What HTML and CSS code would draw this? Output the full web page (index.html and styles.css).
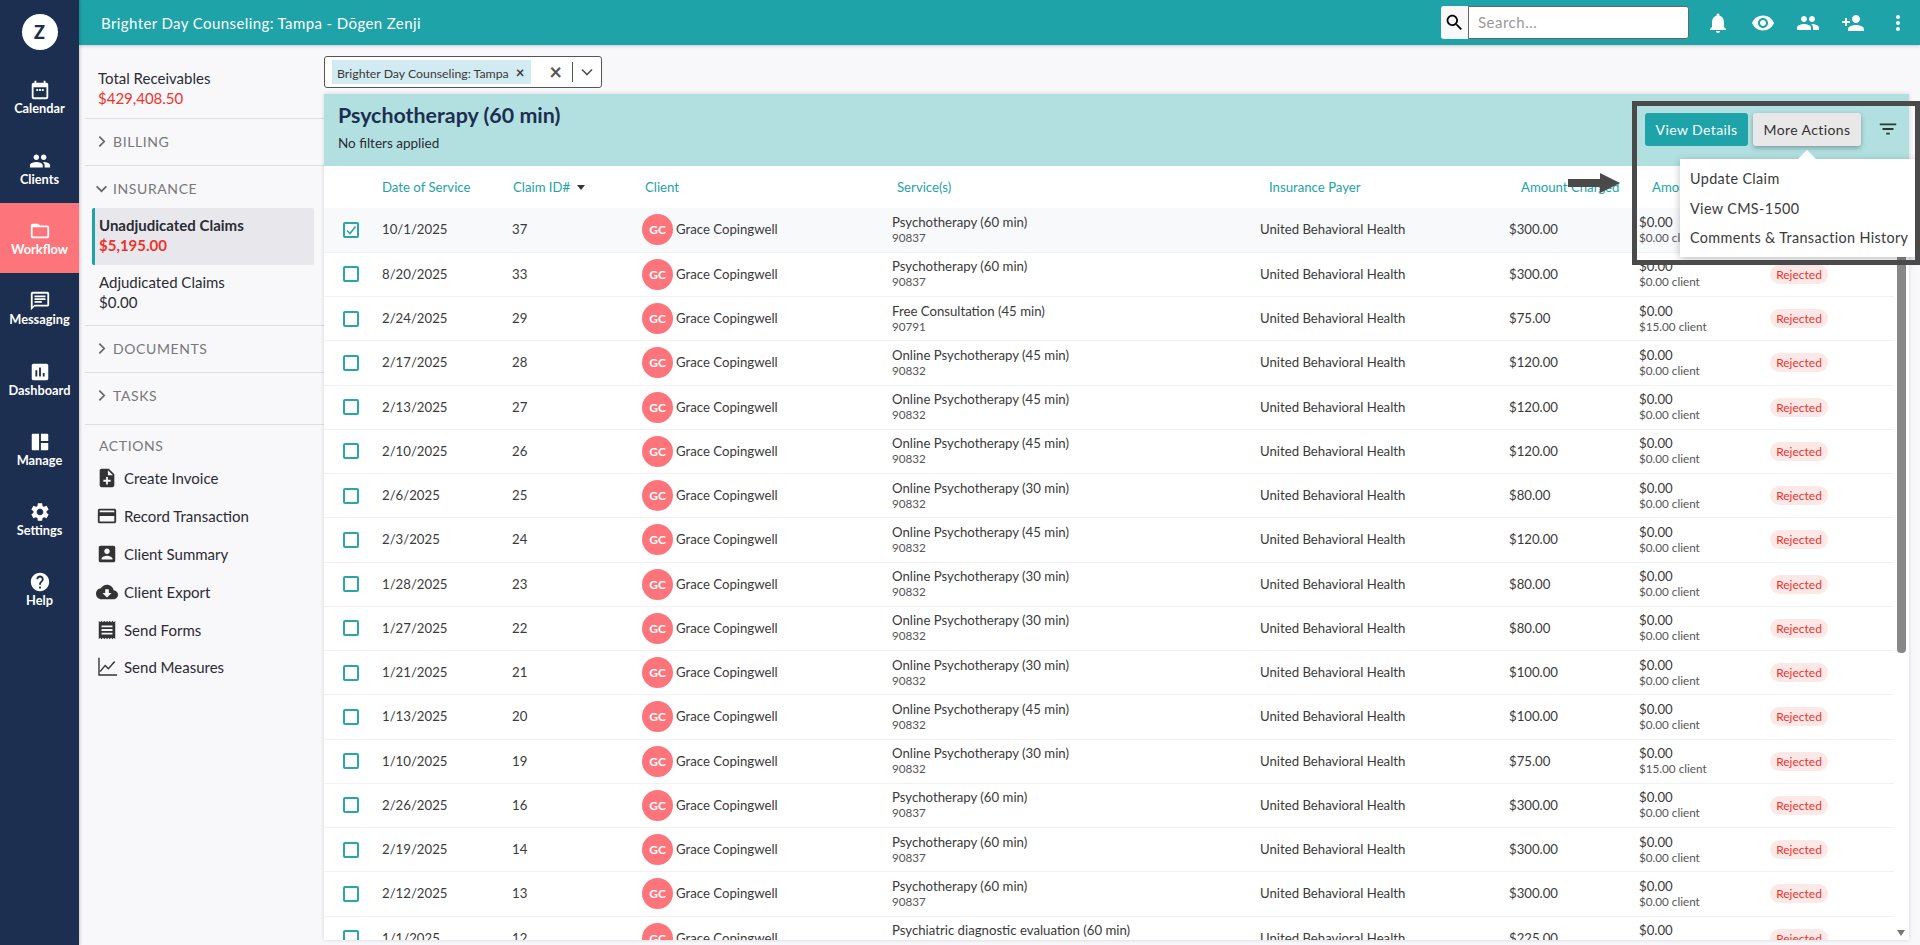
FILE: index.html
```html
<!DOCTYPE html>
<html>
<head>
    <title>Claims</title>
    <link rel="stylesheet" href="styles.css">
</head>
<body>
    <svg class="defs" width="0" height="0">
        <symbol id="i-people" viewBox="0 0 24 24"><path d="M16 11c1.66 0 2.99-1.34 2.99-3S17.66 5 16 5c-1.66 0-3 1.34-3 3s1.34 3 3 3zm-8 0c1.66 0 2.99-1.34 2.99-3S9.66 5 8 5C6.34 5 5 6.34 5 8s1.34 3 3 3zm0 2c-2.33 0-7 1.17-7 3.5V19h14v-2.5c0-2.33-4.67-3.5-7-3.5zm8 0c-.29 0-.62.02-.97.05 1.16.84 1.97 1.97 1.97 3.45V19h6v-2.5c0-2.33-4.67-3.5-7-3.5z"/></symbol>
        <symbol id="i-chev-r" viewBox="0 0 12 12"><path d="M4 1.5L8.5 6 4 10.5" fill="none" stroke="#666" stroke-width="1.6"/></symbol>
    </svg>

    <nav class="rail">
        <div class="logo">Z</div>
        <a class="rail-item">
            <svg viewBox="0 0 24 24"><path d="M19 4h-1V2h-2v2H8V2H6v2H5c-1.1 0-2 .9-2 2v14c0 1.1.9 2 2 2h14c1.1 0 2-.9 2-2V6c0-1.1-.9-2-2-2zm0 16H5V9h14v11zM8 11h2v2H8zm3 0h2v2h-2zm3 0h2v2h-2z"/></svg>
            <span>Calendar</span>
        </a>
        <a class="rail-item">
            <svg viewBox="0 0 24 24"><use href="#i-people"/></svg>
            <span>Clients</span>
        </a>
        <a class="rail-item active">
            <svg viewBox="0 0 24 24"><path d="M20 6h-8l-2-2H4c-1.1 0-1.99.9-1.99 2L2 18c0 1.1.9 2 2 2h16c1.1 0 2-.9 2-2V8c0-1.1-.9-2-2-2zm0 12H4V8h16v10z"/></svg>
            <span>Workflow</span>
        </a>
        <a class="rail-item">
            <svg viewBox="0 0 24 24"><path d="M20 2H4c-1.1 0-2 .9-2 2v18l4-4h14c1.1 0 2-.9 2-2V4c0-1.1-.9-2-2-2zm0 14H6l-2 2V4h16v12zM6 12h8v2H6zm0-3h12v2H6zm0-3h12v2H6z"/></svg>
            <span>Messaging</span>
        </a>
        <a class="rail-item">
            <svg viewBox="0 0 24 24"><path d="M19 3H5c-1.1 0-2 .9-2 2v14c0 1.1.9 2 2 2h14c1.1 0 2-.9 2-2V5c0-1.1-.9-2-2-2zM9 17H7v-7h2v7zm4 0h-2V7h2v10zm4 0h-2v-4h2v4z"/></svg>
            <span>Dashboard</span>
        </a>
        <a class="rail-item">
            <svg viewBox="0 0 24 24"><path d="M4 3h7v18H4c-.6 0-1-.4-1-1V4c0-.6.4-1 1-1zm9 0h7c.6 0 1 .4 1 1v7h-8zm0 10h8v7c0 .6-.4 1-1 1h-7z"/></svg>
            <span>Manage</span>
        </a>
        <a class="rail-item">
            <svg viewBox="0 0 24 24"><path d="M19.14 12.94c.04-.3.06-.61.06-.94 0-.32-.02-.64-.07-.94l2.03-1.58c.18-.14.23-.41.12-.61l-1.92-3.32c-.12-.22-.37-.29-.59-.22l-2.39.96c-.5-.38-1.03-.7-1.62-.94l-.36-2.54c-.04-.24-.24-.41-.48-.41h-3.84c-.24 0-.43.17-.47.41l-.36 2.54c-.59.24-1.13.57-1.62.94l-2.39-.96c-.22-.08-.47 0-.59.22L2.74 8.87c-.12.21-.08.47.12.61l2.03 1.58c-.05.3-.09.63-.09.94s.02.64.07.94l-2.03 1.58c-.18.14-.23.41-.12.61l1.92 3.32c.12.22.37.29.59.22l2.39-.96c.5.38 1.03.7 1.62.94l.36 2.54c.05.24.24.41.48.41h3.84c.24 0 .44-.17.47-.41l.36-2.54c.59-.24 1.13-.56 1.62-.94l2.39.96c.22.08.47 0 .59-.22l1.92-3.32c.12-.22.07-.47-.12-.61l-2.01-1.58zM12 15.6c-1.98 0-3.6-1.62-3.6-3.6s1.62-3.6 3.6-3.6 3.6 1.62 3.6 3.6-1.62 3.6-3.6 3.6z"/></svg>
            <span>Settings</span>
        </a>
        <a class="rail-item">
            <svg viewBox="0 0 24 24"><path d="M12 2C6.48 2 2 6.48 2 12s4.48 10 10 10 10-4.48 10-10S17.52 2 12 2zm1 17h-2v-2h2v2zm2.07-7.75l-.9.92C13.45 12.9 13 13.5 13 15h-2v-.5c0-1.1.45-2.1 1.17-2.83l1.24-1.26c.37-.36.59-.86.59-1.41 0-1.1-.9-2-2-2s-2 .9-2 2H8c0-2.21 1.79-4 4-4s4 1.79 4 4c0 .88-.36 1.68-.93 2.25z"/></svg>
            <span>Help</span>
        </a>
    </nav>

    <div class="page">
        <header class="topbar">
            <div class="topbar-title">Brighter Day Counseling: Tampa - Dōgen Zenji</div>
            <div class="search">
                <span class="search-btn">
                    <svg viewBox="0 0 24 24"><path d="M15.5 14h-.79l-.28-.27C15.41 12.59 16 11.11 16 9.5 16 5.91 13.09 3 9.5 3S3 5.91 3 9.5 5.91 16 9.5 16c1.61 0 3.09-.59 4.23-1.57l.27.28v.79l5 4.99L20.49 19l-4.99-5zm-6 0C7.01 14 5 11.99 5 9.5S7.01 5 9.5 5 14 7.01 14 9.5 11.99 14 9.5 14z"/></svg>
                </span>
                <span class="search-input">Search...</span>
            </div>
            <div class="top-icons">
                <svg viewBox="0 0 24 24"><path d="M12 22c1.1 0 2-.9 2-2h-4c0 1.1.89 2 2 2zm6-6v-5c0-3.07-1.64-5.64-4.5-6.32V4c0-.83-.67-1.5-1.5-1.5s-1.5.67-1.5 1.5v.68C7.63 5.36 6 7.92 6 11v5l-2 2v1h16v-1l-2-2z"/></svg>
                <svg viewBox="0 0 24 24"><path d="M12 4.5C7 4.5 2.73 7.61 1 12c1.73 4.39 6 7.5 11 7.5s9.27-3.11 11-7.5c-1.73-4.39-6-7.5-11-7.5zM12 17c-2.76 0-5-2.24-5-5s2.24-5 5-5 5 2.24 5 5-2.24 5-5 5zm0-8c-1.66 0-3 1.34-3 3s1.34 3 3 3 3-1.34 3-3-1.34-3-3-3z"/></svg>
                <svg viewBox="0 0 24 24"><use href="#i-people"/></svg>
                <svg viewBox="0 0 24 24"><path d="M15 12c2.21 0 4-1.79 4-4s-1.79-4-4-4-4 1.79-4 4 1.79 4 4 4zm-9-2V7H4v3H1v2h3v3h2v-3h3v-2H6zm9 4c-2.67 0-8 1.34-8 4v2h16v-2c0-2.66-5.33-4-8-4z"/></svg>
                <svg viewBox="0 0 24 24"><path d="M12 8c1.1 0 2-.9 2-2s-.9-2-2-2-2 .9-2 2 .9 2 2 2zm0 2c-1.1 0-2 .9-2 2s.9 2 2 2 2-.9 2-2-.9-2-2-2zm0 6c-1.1 0-2 .9-2 2s.9 2 2 2 2-.9 2-2-.9-2-2-2z"/></svg>
            </div>
        </header>

        <div class="content">
            <aside class="side">
                <div class="side-block total">
                    <div>Total Receivables</div>
                    <div class="red">$429,408.50</div>
                </div>
                <div class="side-head"><svg viewBox="0 0 12 12"><use href="#i-chev-r"/></svg>BILLING</div>
                <div class="side-group">
                    <div class="side-head open"><svg viewBox="0 0 12 12"><path d="M1.5 4L6 8.5 10.5 4" fill="none" stroke="#666" stroke-width="1.6"/></svg>INSURANCE</div>
                    <div class="side-link selected">
                        <div>Unadjudicated Claims</div>
                        <div class="red">$5,195.00</div>
                    </div>
                    <div class="side-link">
                        <div>Adjudicated Claims</div>
                        <div>$0.00</div>
                    </div>
                </div>
                <div class="side-head"><svg viewBox="0 0 12 12"><use href="#i-chev-r"/></svg>DOCUMENTS</div>
                <div class="side-head tasks"><svg viewBox="0 0 12 12"><use href="#i-chev-r"/></svg>TASKS</div>
                <div class="actions">
                    <div class="actions-title">ACTIONS</div>
                    <a><svg viewBox="0 0 24 24"><path d="M14 2H6c-1.1 0-1.99.9-1.99 2L4 20c0 1.1.89 2 1.99 2H18c1.1 0 2-.9 2-2V8l-6-6zm2 14h-3v3h-2v-3H8v-2h3v-3h2v3h3v2zm-3-7V3.5L18.5 9H13z"/></svg>Create Invoice</a>
                    <a><svg viewBox="0 0 24 24"><path d="M20 4H4c-1.11 0-1.99.89-1.99 2L2 18c0 1.11.89 2 2 2h16c1.11 0 2-.89 2-2V6c0-1.11-.89-2-2-2zm0 14H4v-6h16v6zm0-10H4V6h16v2z"/></svg>Record Transaction</a>
                    <a><svg viewBox="0 0 24 24"><path d="M3 5v14c0 1.1.89 2 2 2h14c1.1 0 2-.9 2-2V5c0-1.1-.9-2-2-2H5c-1.11 0-2 .9-2 2zm12 4c0 1.66-1.34 3-3 3s-3-1.34-3-3 1.34-3 3-3 3 1.34 3 3zm-9 8c0-2 4-3.1 6-3.1s6 1.1 6 3.1v1H6v-1z"/></svg>Client Summary</a>
                    <a><svg viewBox="0 0 24 24"><path d="M19.35 10.04C18.67 6.59 15.64 4 12 4 9.11 4 6.6 5.64 5.35 8.04 2.34 8.36 0 10.91 0 14c0 3.31 2.69 6 6 6h13c2.76 0 5-2.24 5-5 0-2.64-2.05-4.78-4.65-4.96zM17 13l-5 5-5-5h3V9h4v4h3z"/></svg>Client Export</a>
                    <a><svg viewBox="0 0 24 24"><path d="M18 17H6v-2h12v2zm0-4H6v-2h12v2zm0-4H6V7h12v2zM3 22l1.5-1.5L6 22l1.5-1.5L9 22l1.5-1.5L12 22l1.5-1.5L15 22l1.5-1.5L18 22l1.5-1.5L21 22V2l-1.5 1.5L18 2l-1.5 1.5L15 2l-1.5 1.5L12 2l-1.5 1.5L9 2 7.5 3.5 6 2 4.5 3.5 3 2v20z"/></svg>Send Forms</a>
                    <a><svg viewBox="0 0 24 24"><path d="M2.5 2v19.5H23V20H4V2zM5 17.5l5-6 3.5 3.5 7.5-8.5-1.2-1-6.3 7.2-3.5-3.5-6 7.2z"/></svg>Send Measures</a>
                </div>
            </aside>

            <main class="main">
                <div class="picker">
                    <div class="chip">Brighter Day Counseling: Tampa<b>×</b></div>
                    <div class="picker-clear">×</div>
                    <div class="picker-arrow"><svg viewBox="0 0 12 12"><path d="M1 3.5L6 8.5 11 3.5" fill="none" stroke="#555" stroke-width="1.7"/></svg></div>
                </div>

                <section class="card">
                    <div class="card-head">
                        <div>
                            <h1>Psychotherapy (60 min)</h1>
                            <p>No filters applied</p>
                        </div>
                        <div class="head-btns">
                            <button class="btn btn-teal">View Details</button>
                            <button class="btn btn-grey">More Actions</button>
                            <svg class="filter" viewBox="0 0 24 24"><path d="M10 18h4v-2h-4v2zM3 6v2h18V6H3zm3 7h12v-2H6v2z"/></svg>
                        </div>
                    </div>

                    <div class="table-wrap">
                        <table>
                            <colgroup>
                                <col class="c-check"><col class="c-date"><col class="c-claim"><col class="c-client"><col class="c-service"><col class="c-payer"><col class="c-charged"><col class="c-amount"><col class="c-status">
                            </colgroup>
                            <thead>
                                <tr>
                                    <th></th>
                                    <th>Date of Service</th>
                                    <th class="h-claim">Claim ID# <i class="sort"></i></th>
                                    <th class="h-client">Client</th>
                                    <th class="h-service">Service(s)</th>
                                    <th class="h-payer">Insurance Payer</th>
                                    <th class="h-charged">Amount Charged</th>
                                    <th class="h-amount">Amount Paid</th>
                                    <th></th>
                                </tr>
                            </thead>
                            <tbody>
                                <tr class="first">
                                    <td><span class="box checked"><svg viewBox="0 0 12 12"><path d="M2 6.5L5 9.5 10.5 2.5" fill="none" stroke="#2aa5a9" stroke-width="1.6"/></svg></span></td>
                                    <td>10/1/2025</td><td>37</td>
                                    <td><div class="who"><span class="avatar">GC</span>Grace Copingwell</div></td>
                                    <td>Psychotherapy (60 min)<small>90837</small></td>
                                    <td>United Behavioral Health</td><td>$300.00</td>
                                    <td>$0.00<small>$0.00 client</small></td>
                                    <td><span class="pill">Rejected</span></td>
                                </tr>
                                <tr>
                                    <td><span class="box"></span></td>
                                    <td>8/20/2025</td><td>33</td>
                                    <td><div class="who"><span class="avatar">GC</span>Grace Copingwell</div></td>
                                    <td>Psychotherapy (60 min)<small>90837</small></td>
                                    <td>United Behavioral Health</td><td>$300.00</td>
                                    <td>$0.00<small>$0.00 client</small></td>
                                    <td><span class="pill">Rejected</span></td>
                                </tr>
                                <tr>
                                    <td><span class="box"></span></td>
                                    <td>2/24/2025</td><td>29</td>
                                    <td><div class="who"><span class="avatar">GC</span>Grace Copingwell</div></td>
                                    <td>Free Consultation (45 min)<small>90791</small></td>
                                    <td>United Behavioral Health</td><td>$75.00</td>
                                    <td>$0.00<small>$15.00 client</small></td>
                                    <td><span class="pill">Rejected</span></td>
                                </tr>
                                <tr>
                                    <td><span class="box"></span></td>
                                    <td>2/17/2025</td><td>28</td>
                                    <td><div class="who"><span class="avatar">GC</span>Grace Copingwell</div></td>
                                    <td>Online Psychotherapy (45 min)<small>90832</small></td>
                                    <td>United Behavioral Health</td><td>$120.00</td>
                                    <td>$0.00<small>$0.00 client</small></td>
                                    <td><span class="pill">Rejected</span></td>
                                </tr>
                                <tr>
                                    <td><span class="box"></span></td>
                                    <td>2/13/2025</td><td>27</td>
                                    <td><div class="who"><span class="avatar">GC</span>Grace Copingwell</div></td>
                                    <td>Online Psychotherapy (45 min)<small>90832</small></td>
                                    <td>United Behavioral Health</td><td>$120.00</td>
                                    <td>$0.00<small>$0.00 client</small></td>
                                    <td><span class="pill">Rejected</span></td>
                                </tr>
                                <tr>
                                    <td><span class="box"></span></td>
                                    <td>2/10/2025</td><td>26</td>
                                    <td><div class="who"><span class="avatar">GC</span>Grace Copingwell</div></td>
                                    <td>Online Psychotherapy (45 min)<small>90832</small></td>
                                    <td>United Behavioral Health</td><td>$120.00</td>
                                    <td>$0.00<small>$0.00 client</small></td>
                                    <td><span class="pill">Rejected</span></td>
                                </tr>
                                <tr>
                                    <td><span class="box"></span></td>
                                    <td>2/6/2025</td><td>25</td>
                                    <td><div class="who"><span class="avatar">GC</span>Grace Copingwell</div></td>
                                    <td>Online Psychotherapy (30 min)<small>90832</small></td>
                                    <td>United Behavioral Health</td><td>$80.00</td>
                                    <td>$0.00<small>$0.00 client</small></td>
                                    <td><span class="pill">Rejected</span></td>
                                </tr>
                                <tr>
                                    <td><span class="box"></span></td>
                                    <td>2/3/2025</td><td>24</td>
                                    <td><div class="who"><span class="avatar">GC</span>Grace Copingwell</div></td>
                                    <td>Online Psychotherapy (45 min)<small>90832</small></td>
                                    <td>United Behavioral Health</td><td>$120.00</td>
                                    <td>$0.00<small>$0.00 client</small></td>
                                    <td><span class="pill">Rejected</span></td>
                                </tr>
                                <tr>
                                    <td><span class="box"></span></td>
                                    <td>1/28/2025</td><td>23</td>
                                    <td><div class="who"><span class="avatar">GC</span>Grace Copingwell</div></td>
                                    <td>Online Psychotherapy (30 min)<small>90832</small></td>
                                    <td>United Behavioral Health</td><td>$80.00</td>
                                    <td>$0.00<small>$0.00 client</small></td>
                                    <td><span class="pill">Rejected</span></td>
                                </tr>
                                <tr>
                                    <td><span class="box"></span></td>
                                    <td>1/27/2025</td><td>22</td>
                                    <td><div class="who"><span class="avatar">GC</span>Grace Copingwell</div></td>
                                    <td>Online Psychotherapy (30 min)<small>90832</small></td>
                                    <td>United Behavioral Health</td><td>$80.00</td>
                                    <td>$0.00<small>$0.00 client</small></td>
                                    <td><span class="pill">Rejected</span></td>
                                </tr>
                                <tr>
                                    <td><span class="box"></span></td>
                                    <td>1/21/2025</td><td>21</td>
                                    <td><div class="who"><span class="avatar">GC</span>Grace Copingwell</div></td>
                                    <td>Online Psychotherapy (30 min)<small>90832</small></td>
                                    <td>United Behavioral Health</td><td>$100.00</td>
                                    <td>$0.00<small>$0.00 client</small></td>
                                    <td><span class="pill">Rejected</span></td>
                                </tr>
                                <tr>
                                    <td><span class="box"></span></td>
                                    <td>1/13/2025</td><td>20</td>
                                    <td><div class="who"><span class="avatar">GC</span>Grace Copingwell</div></td>
                                    <td>Online Psychotherapy (45 min)<small>90832</small></td>
                                    <td>United Behavioral Health</td><td>$100.00</td>
                                    <td>$0.00<small>$0.00 client</small></td>
                                    <td><span class="pill">Rejected</span></td>
                                </tr>
                                <tr>
                                    <td><span class="box"></span></td>
                                    <td>1/10/2025</td><td>19</td>
                                    <td><div class="who"><span class="avatar">GC</span>Grace Copingwell</div></td>
                                    <td>Online Psychotherapy (30 min)<small>90832</small></td>
                                    <td>United Behavioral Health</td><td>$75.00</td>
                                    <td>$0.00<small>$15.00 client</small></td>
                                    <td><span class="pill">Rejected</span></td>
                                </tr>
                                <tr>
                                    <td><span class="box"></span></td>
                                    <td>2/26/2025</td><td>16</td>
                                    <td><div class="who"><span class="avatar">GC</span>Grace Copingwell</div></td>
                                    <td>Psychotherapy (60 min)<small>90837</small></td>
                                    <td>United Behavioral Health</td><td>$300.00</td>
                                    <td>$0.00<small>$0.00 client</small></td>
                                    <td><span class="pill">Rejected</span></td>
                                </tr>
                                <tr>
                                    <td><span class="box"></span></td>
                                    <td>2/19/2025</td><td>14</td>
                                    <td><div class="who"><span class="avatar">GC</span>Grace Copingwell</div></td>
                                    <td>Psychotherapy (60 min)<small>90837</small></td>
                                    <td>United Behavioral Health</td><td>$300.00</td>
                                    <td>$0.00<small>$0.00 client</small></td>
                                    <td><span class="pill">Rejected</span></td>
                                </tr>
                                <tr>
                                    <td><span class="box"></span></td>
                                    <td>2/12/2025</td><td>13</td>
                                    <td><div class="who"><span class="avatar">GC</span>Grace Copingwell</div></td>
                                    <td>Psychotherapy (60 min)<small>90837</small></td>
                                    <td>United Behavioral Health</td><td>$300.00</td>
                                    <td>$0.00<small>$0.00 client</small></td>
                                    <td><span class="pill">Rejected</span></td>
                                </tr>
                                <tr>
                                    <td><span class="box"></span></td>
                                    <td>1/1/2025</td><td>12</td>
                                    <td><div class="who"><span class="avatar">GC</span>Grace Copingwell</div></td>
                                    <td>Psychiatric diagnostic evaluation (60 min)<small>90791</small></td>
                                    <td>United Behavioral Health</td><td>$225.00</td>
                                    <td>$0.00<small>$0.00 client</small></td>
                                    <td><span class="pill">Rejected</span></td>
                                </tr>
                            </tbody>
                        </table>
                        <div class="scrollbar"><div class="thumb"></div><i class="scroll-down"></i></div>
                    </div>
                </section>
            </main>
        </div>
    </div>

    <!-- annotation drawn over the screen -->
    <div class="menu">
        <div>Update Claim</div>
        <div>View CMS-1500</div>
        <div>Comments &amp; Transaction History</div>
    </div>
    <div class="callout"></div>
    <div class="arrow"></div>
</body>
</html>
```

FILE: styles.css
```css
* {
    box-sizing: border-box;
}

body {
    margin: 0;
    height: 100vh;
    overflow: hidden;
    display: flex;
    background-color: #f8f8fb;
    color: #3a3a3a;
    font-family: Lato, "Open Sans", sans-serif;
    font-size: 14px;
}

.defs {
    position: absolute;
}

/* left rail */
.rail {
    width: 79px;
    flex-shrink: 0;
    background-color: #1c2f50;
    color: #fff;
    box-shadow: 1px 0 3px rgba(0, 0, 0, 0.2);
    z-index: 2;
}

.logo {
    width: 36px;
    height: 36px;
    margin: 14px auto 12.4px;
    border-radius: 50%;
    background-color: #fff;
    color: #1c2f50;
    font-size: 18px;
    font-weight: 900;
    line-height: 36px;
    text-align: center;
}

.rail-item {
    display: flex;
    flex-direction: column;
    align-items: center;
    height: 70.3px;
    padding-top: 17px;
    font-size: 12.8px;
    font-weight: 700;
    line-height: 14px;
}

.rail-item svg {
    width: 22px;
    height: 22px;
    fill: #fff;
}

.rail-item.active {
    background-color: #fe747b;
}

/* top bar */
.page {
    flex: 1;
    min-width: 0;
    display: flex;
    flex-direction: column;
}

.topbar {
    height: 45px;
    flex-shrink: 0;
    display: flex;
    align-items: center;
    padding-left: 22px;
    background-color: #1da3a8;
    color: #fff;
    box-shadow: 0 1px 3px rgba(0, 0, 0, 0.2);
    z-index: 1;
}

.topbar-title {
    flex: 1;
    font-size: 15px;
    letter-spacing: 0.4px;
}

.search {
    display: flex;
    width: 248px;
    height: 33px;
}

.search-btn {
    width: 27px;
    display: flex;
    align-items: center;
    justify-content: center;
    background-color: #f8f8f8;
    border-radius: 3px 0 0 3px;
}

.search-btn svg {
    width: 21px;
    height: 21px;
}

.search-input {
    flex: 1;
    padding: 0 9px;
    line-height: 31px;
    background-color: #fff;
    border: 1px solid #666;
    border-radius: 0 3px 3px 0;
    color: #999;
    font-size: 15px;
    letter-spacing: 0.5px;
}

.top-icons {
    display: flex;
    gap: 21px;
    margin-left: 17px;
    margin-right: 10px;
}

.top-icons svg {
    width: 24px;
    height: 24px;
    fill: #fff;
}

/* sidebar */
.content {
    flex: 1;
    min-height: 0;
    display: flex;
}

.side {
    width: 245px;
    flex-shrink: 0;
    padding-left: 6px;
    font-size: 15px;
    color: #2b2b33;
}

.red {
    color: #f0322a;
}

.side-block.total {
    height: 74px;
    padding: 23px 0 0 13px;
    line-height: 20px;
    border-bottom: 1px solid #dddde2;
}

.side-head {
    display: flex;
    align-items: center;
    height: 47px;
    padding-left: 10px;
    padding-bottom: 2px;
    border-bottom: 1px solid #dddde2;
    color: #777;
    font-size: 14px;
    letter-spacing: 0.6px;
}

.side-head svg {
    width: 13px;
    height: 13px;
    margin-right: 5px;
}

.side-head.open {
    border-bottom: none;
    height: 42px;
    padding-top: 2px;
    padding-bottom: 0;
}

.side-head.tasks {
    height: 52px;
    padding-bottom: 7px;
}

.side-group {
    height: 160px;
    border-bottom: 1px solid #dddde2;
}

.side-link {
    height: 57px;
    margin-left: 7px;
    margin-right: 10px;
    padding: 7px 0 0 7px;
    line-height: 20px;
}

.side-link.selected {
    border-left: 3px solid #1da3a8;
    padding-left: 4px;
    border-radius: 2px;
    background-color: #e8e8ec;
    font-weight: 700;
}

.actions {
    padding: 12px 0 0 14px;
}

.actions-title {
    margin-bottom: 4.5px;
    color: #777;
    font-size: 14px;
    letter-spacing: 0.6px;
    line-height: 18px;
}

.actions a {
    display: flex;
    align-items: center;
    gap: 6px;
    height: 37.8px;
}

.actions svg {
    width: 22px;
    height: 22px;
    margin-left: -3px;
    fill: #333;
    flex-shrink: 0;
}

/* main column */
.main {
    flex: 1;
    min-width: 0;
    display: flex;
    flex-direction: column;
    padding-right: 11px;
    padding-bottom: 5px;
}

.picker {
    width: 278px;
    height: 32px;
    margin-top: 11px;
    margin-bottom: 6px;
    padding: 3px 0 3px 7px;
    display: flex;
    align-items: center;
    background-color: #fff;
    border: 1px solid #555;
    border-radius: 3px;
}

.chip {
    width: 199px;
    height: 24px;
    flex-shrink: 0;
    padding-left: 5px;
    background-color: #d2eaf2;
    font-size: 12.3px;
    line-height: 24px;
    white-space: nowrap;
}

.chip b {
    margin-left: 7px;
    font-size: 15px;
}

.picker-clear {
    width: 36px;
    padding-right: 5px;
    font-size: 22px;
    font-weight: 700;
    color: #555;
    text-align: right;
    line-height: 24px;
}

.picker-arrow {
    flex: 1;
    height: 20px;
    margin-left: 5px;
    display: flex;
    align-items: center;
    justify-content: center;
    border-left: 1px solid #555;
}

.picker-arrow svg {
    width: 12px;
    height: 12px;
}

.card {
    flex: 1;
    min-height: 0;
    display: flex;
    flex-direction: column;
    background-color: #fff;
    box-shadow: 0 0 4px rgba(0, 0, 0, 0.15);
}

.card-head {
    height: 72px;
    flex-shrink: 0;
    display: flex;
    justify-content: space-between;
    padding: 7px 0 0 14px;
    background-color: #b2e0e1;
    color: #1c2f50;
}

.card-head h1 {
    margin: 0;
    font-size: 21.4px;
    font-weight: 700;
    line-height: 28px;
}

.card-head p {
    margin: 5px 0 0;
    font-size: 13.5px;
    line-height: 18px;
    color: #2b2b33;
}

.head-btns {
    display: flex;
    align-items: flex-start;
    gap: 5px;
    padding-top: 12px;
}

.btn {
    height: 33px;
    border: none;
    border-radius: 3px;
    font-family: inherit;
    font-size: 14px;
    letter-spacing: 0.4px;
}

.btn-teal {
    width: 103px;
    background-color: #1da3a8;
    color: #fff;
}

.btn-grey {
    width: 108px;
    background-color: #e8e8e8;
    color: #333;
    box-shadow: 0 2px 5px rgba(0, 0, 0, 0.3);
}

.filter {
    width: 22px;
    height: 22px;
    margin: 5px 10px 0 11px;
    fill: #333;
}

/* claims table */
.table-wrap {
    flex: 1;
    min-height: 0;
    position: relative;
    overflow: hidden;
}

table {
    width: 1570px;
    table-layout: fixed;
    border-collapse: collapse;
    font-size: 13.2px;
}

.c-check { width: 58px; }
.c-date { width: 130px; }
.c-claim { width: 130px; }
.c-client { width: 250px; }
.c-service { width: 368px; }
.c-payer { width: 249px; }
.c-charged { width: 130px; }
.c-amount { width: 131px; }
.c-status { width: 124px; }

th {
    height: 42px;
    padding: 0;
    font-weight: 400;
    text-align: left;
    color: #1da3a8;
}

.h-claim { padding-left: 1px; }
.h-client { padding-left: 3px; }
.h-service { padding-left: 5px; }
.h-payer { padding-left: 9px; }
.h-charged { padding-left: 12px; }
.h-amount { padding-left: 13px; }

.sort {
    display: inline-block;
    margin-left: 3px;
    margin-bottom: 2px;
    border-left: 4px solid transparent;
    border-right: 4px solid transparent;
    border-top: 5px solid #333;
}

td {
    height: 44.25px;
    padding: 0;
    border-bottom: 1px solid #f2f2f5;
    line-height: 15px;
    white-space: nowrap;
}

td small {
    display: block;
    font-size: 11.7px;
    color: #555;
}

tr.first td {
    background-color: #f8f9fb;
}

.box {
    display: block;
    width: 16px;
    height: 16px;
    margin-left: 19px;
    border: 2px solid #2aa5a9;
    border-radius: 2px;
    background-color: #fff;
}

.box svg {
    display: block;
    width: 12px;
    height: 12px;
}

.who {
    display: flex;
    align-items: center;
    gap: 3px;
}

.avatar {
    width: 31px;
    height: 31px;
    border-radius: 50%;
    background-color: #fe747b;
    color: #fff;
    font-size: 12px;
    font-weight: 700;
    line-height: 31px;
    text-align: center;
}

.pill {
    display: inline-block;
    width: 58px;
    height: 19px;
    border-radius: 10px;
    background-color: #fde8e8;
    color: #f0322a;
    font-size: 12px;
    line-height: 19px;
    text-align: center;
}

/* fake scrollbar along the table */
.scrollbar {
    position: absolute;
    top: 90px;
    right: 3px;
    bottom: 0;
    width: 9px;
}

.thumb {
    height: 397px;
    border-radius: 0 0 4px 4px;
    background-color: #888;
}

.scroll-down {
    position: absolute;
    left: 0;
    bottom: 4px;
    border-left: 4.5px solid transparent;
    border-right: 4.5px solid transparent;
    border-top: 6px solid #777;
}

/* dropdown and the annotation on top of it */
.menu {
    position: absolute;
    left: 1680px;
    top: 159px;
    width: 235px;
    height: 98px;
    padding-top: 5px;
    background-color: #fff;
    box-shadow: 0 2px 8px rgba(0, 0, 0, 0.25);
    z-index: 3;
    font-size: 14.4px;
    letter-spacing: 0.35px;
}

.menu::before {
    content: "";
    position: absolute;
    left: 118px;
    top: -9px;
    border-left: 9px solid transparent;
    border-right: 9px solid transparent;
    border-bottom: 9px solid #fff;
}

.menu div {
    height: 29.5px;
    padding-left: 10px;
    line-height: 29.5px;
    white-space: nowrap;
}

.callout {
    position: absolute;
    left: 1632px;
    top: 101px;
    width: 288px;
    height: 164px;
    border: 5px solid #4a4a4a;
    z-index: 4;
}

.arrow {
    position: absolute;
    left: 1568px;
    top: 179px;
    width: 34px;
    height: 8px;
    background-color: #4a4a4a;
    z-index: 4;
}

.arrow::after {
    content: "";
    position: absolute;
    left: 32px;
    top: -6px;
    border-top: 10px solid transparent;
    border-bottom: 10px solid transparent;
    border-left: 20px solid #4a4a4a;
}
```
